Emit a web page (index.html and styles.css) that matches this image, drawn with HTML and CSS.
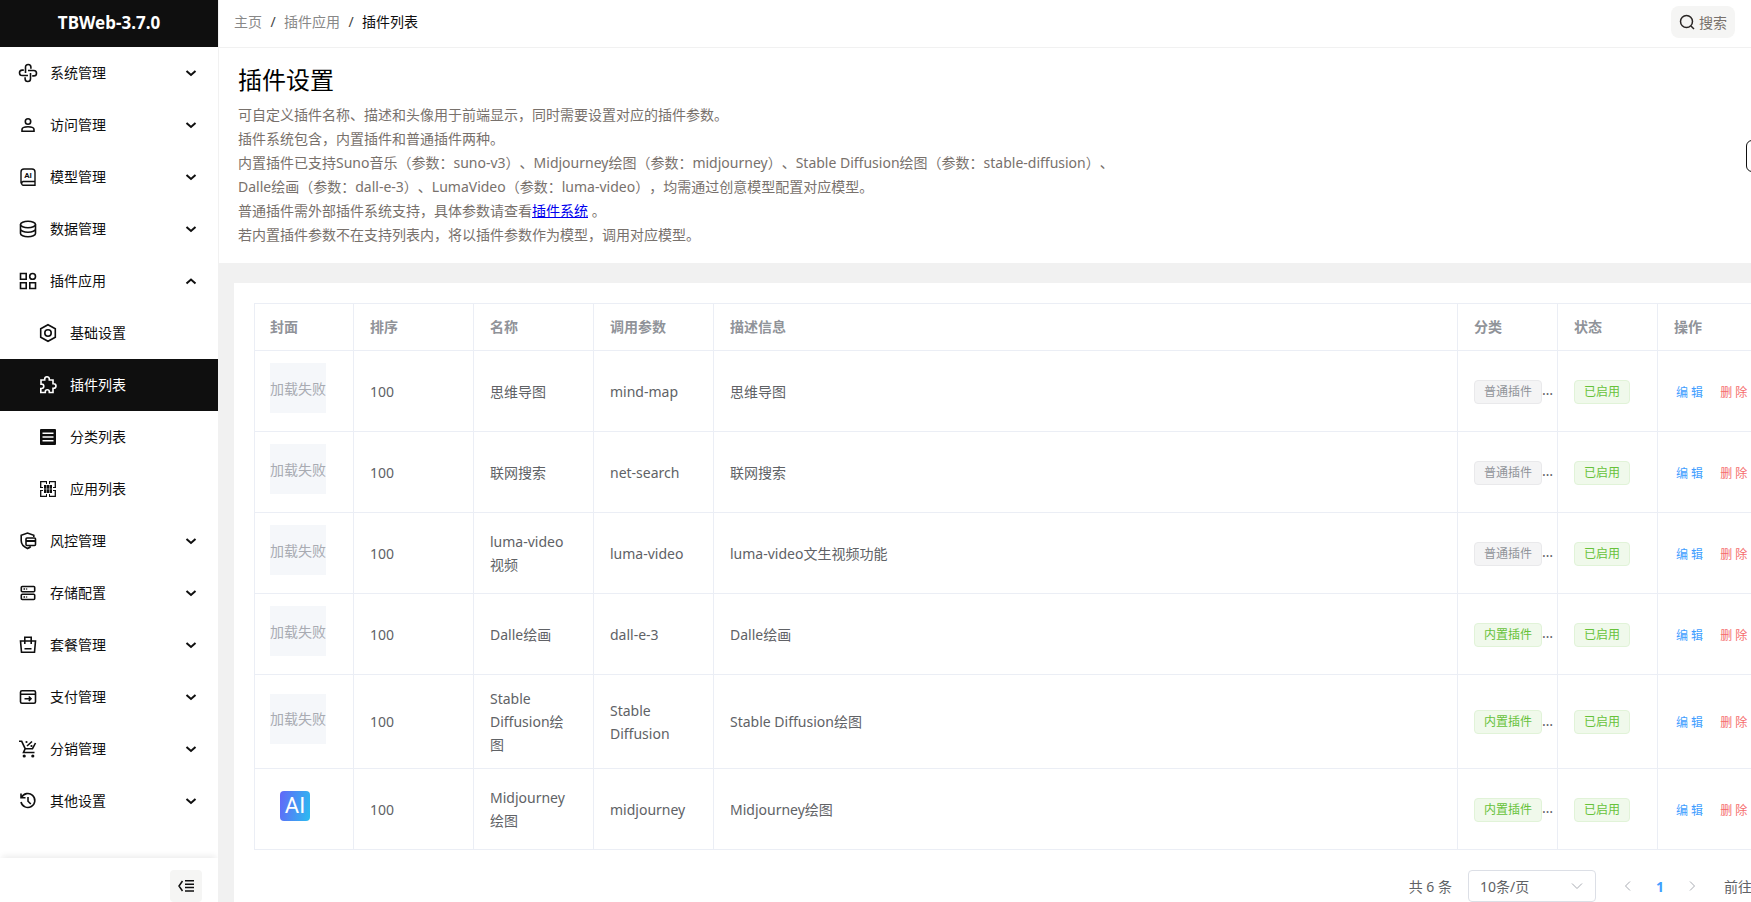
FILE: index.html
```html
<!DOCTYPE html>
<html lang="zh-CN">
<head>
    <meta charset="UTF-8">
    <meta name="viewport" content="width=device-width, initial-scale=1.0">
    <title>插件列表 - TBWeb</title>
    <link rel="stylesheet" href="styles.css">
</head>
<body>
    <!-- Shared icons -->
    <svg class="icon-defs" aria-hidden="true">
        <symbol id="i-down" viewBox="0 0 12 12"><path d="M1.5 4 6 8l4.5-4" fill="none" stroke="currentColor" stroke-width="2"/></symbol>
        <symbol id="i-up" viewBox="0 0 12 12"><path d="M1.5 8.5 6 4.5l4.5 4" fill="none" stroke="currentColor" stroke-width="2"/></symbol>
    </svg>

    <!-- Sidebar -->
    <aside class="sidebar">
        <div class="logo">TBWeb-3.7.0</div>
        <nav class="menu">
            <button type="button" class="menu-item">
                <svg class="menu-icon" viewBox="0 0 20 20"><path d="M7.500 10V4.200a2.700 2.700 0 0 1 5.400 0v1.600M10 7.500h5.800a2.700 2.700 0 0 1 0 5.400h-1.600M12.500 10v5.800a2.700 2.700 0 0 1-5.400 0v-1.600M10 12.500H4.200a2.700 2.700 0 0 1 0-5.400h1.600"/></svg>
                <span>系统管理</span><svg class="arrow"><use href="#i-down"/></svg>
            </button>
            <button type="button" class="menu-item">
                <svg class="menu-icon" viewBox="0 0 20 20"><circle cx="10" cy="6.5" r="2.7"/><path d="M4 16.200v-1.700c0-1.600 2.500-2.700 6-2.700s6 1.100 6 2.700v1.700z"/></svg>
                <span>访问管理</span><svg class="arrow"><use href="#i-down"/></svg>
            </button>
            <button type="button" class="menu-item">
                <svg class="menu-icon" viewBox="0 0 20 20"><path d="M17 14.500H5a2 2 0 0 0 0 3.800h12V5a3 3 0 0 0-3-3H6a3 3 0 0 0-3 3v11.500" stroke-width="1.4"/><text x="10" y="11" class="icon-text">AI</text></svg>
                <span>模型管理</span><svg class="arrow"><use href="#i-down"/></svg>
            </button>
            <button type="button" class="menu-item">
                <svg class="menu-icon" viewBox="0 0 20 20"><ellipse cx="10" cy="5.5" rx="7.5" ry="3.2"/><path d="M2.500 5.500v9c0 1.800 3.300 3.200 7.500 3.200s7.500-1.400 7.500-3.200v-9M2.500 10c0 1.800 3.300 3.200 7.500 3.200s7.500-1.400 7.500-3.200"/></svg>
                <span>数据管理</span><svg class="arrow"><use href="#i-down"/></svg>
            </button>
            <button type="button" class="menu-item">
                <svg class="menu-icon" viewBox="0 0 20 20"><path d="M2.500 2.500h5.700v5.700H2.500zM2.500 11.800h5.700v5.700H2.500zM11.800 11.800h5.700v5.700h-5.700z"/><circle cx="14.6" cy="5.4" r="2.9"/></svg>
                <span>插件应用</span><svg class="arrow"><use href="#i-up"/></svg>
            </button>
            <a href="#" class="menu-item sub">
                <svg class="menu-icon" viewBox="0 0 20 20"><path d="M10 1.700 17.300 5.800v8.400L10 18.300 2.700 14.200V5.800z"/><circle cx="10" cy="10" r="3.2"/></svg>
                <span>基础设置</span>
            </a>
            <a href="#" class="menu-item sub active">
                <svg class="menu-icon" viewBox="0 0 20 20"><path d="M3 5h3.700V4a2.300 2.300 0 0 1 4.600 0v1H15v3.700h.7a2.300 2.300 0 0 1 0 4.600H15v4.200h-3.700v-.8a2 2 0 0 0-4 0v.8H2.800v-4h.8a2.200 2.200 0 0 0 0-4.400H3z"/></svg>
                <span>插件列表</span>
            </a>
            <a href="#" class="menu-item sub">
                <svg class="menu-icon" viewBox="0 0 20 20"><rect x="2" y="2" width="16" height="16" rx="1" fill="currentColor" stroke="none"/><path d="M4.500 6.300h11M4.500 10h11M4.500 13.800h11" stroke="#fff"/></svg>
                <span>分类列表</span>
            </a>
            <a href="#" class="menu-item sub">
                <svg class="menu-icon" viewBox="0 0 20 20"><path d="M8.500 2.700H2.700v5.800M11.500 2.700h5.800v5.800M8.500 17.300H2.700v-5.800M11.500 17.300h5.800v-5.800" stroke-width="1.3"/><path d="M8.500 2v3M11.500 2v3M8.500 15v3M11.500 15v3M2 8.500h3M15 8.500h3M2 11.500h3M15 11.500h3" stroke-width="1"/><path d="M6 6h8v8H6z" fill="currentColor" stroke="none"/><path d="M8.500 6v8M11.500 6v8M6 10h8" stroke="#fff" stroke-width=".5"/></svg>
                <span>应用列表</span>
            </a>
            <button type="button" class="menu-item">
                <svg class="menu-icon" viewBox="0 0 20 20"><path d="M15.800 6V4.300L9.500 2 3.200 4.300v5.500c0 3.600 2.600 6 6.300 7.700 1.300-.6 2.400-1.300 3.300-2"/><rect x="8" y="7" width="9.500" height="7.500" rx="1"/><path d="M8 10h9.500" stroke-width="2"/></svg>
                <span>风控管理</span><svg class="arrow"><use href="#i-down"/></svg>
            </button>
            <button type="button" class="menu-item">
                <svg class="menu-icon" viewBox="0 0 20 20"><rect x="3.300" y="3.500" width="13.400" height="5.200" rx="1"/><rect x="3.300" y="11.300" width="13.400" height="5.200" rx="1"/><path d="M5.500 6h1.600M8.200 6h1M5.500 14h1.600M8.200 14h1"/></svg>
                <span>存储配置</span><svg class="arrow"><use href="#i-down"/></svg>
            </button>
            <button type="button" class="menu-item">
                <svg class="menu-icon" viewBox="0 0 20 20"><path d="M2.500 6h15l-1 11.300h-13zM6.800 6V2.300h6.400V6M6.800 6v3M13.200 6v3M6.500 13.800h7"/></svg>
                <span>套餐管理</span><svg class="arrow"><use href="#i-down"/></svg>
            </button>
            <button type="button" class="menu-item">
                <svg class="menu-icon" viewBox="0 0 20 20"><rect x="2.500" y="3.800" width="15" height="12.400" rx="1.500"/><path d="M2.500 7.300h15M6.500 11.700h6M10.800 9.500l2.200 2.200-2.200 2.200"/></svg>
                <span>支付管理</span><svg class="arrow"><use href="#i-down"/></svg>
            </button>
            <button type="button" class="menu-item">
                <svg class="menu-icon" viewBox="0 0 20 20"><path d="M1 2.300h2.700l3.500 7.400h7.300L17.500 4M7.200 9.700 5.500 13.500h11M9 7l5-4.500"/><g fill="currentColor" stroke="none"><circle cx="8.500" cy="3" r="1.100"/><circle cx="13.500" cy="7" r="1.100"/><circle cx="6.200" cy="17" r="1.600"/><circle cx="14.800" cy="17" r="1.600"/></g></svg>
                <span>分销管理</span><svg class="arrow"><use href="#i-down"/></svg>
            </button>
            <button type="button" class="menu-item">
                <svg class="menu-icon" viewBox="0 0 20 20"><path d="M3.500 6.500a7 7 0 1 1-.5 4.500M3 2.500v4.300h4.500M10 6v4.200l2.800 2.800"/></svg>
                <span>其他设置</span><svg class="arrow"><use href="#i-down"/></svg>
            </button>
        </nav>
        <div class="sidebar-footer">
            <button type="button" class="collapse-btn" aria-label="收起菜单">
                <svg viewBox="0 0 18 18"><path d="M5.500 4 2 9l3.500 5M8 3.800h9M8 7.200h9M8 10.600h9M8 14h9"/></svg>
            </button>
        </div>
    </aside>

    <!-- Main area -->
    <div class="main">
        <header class="topbar">
            <nav class="breadcrumb">
                <a href="#">主页</a><span class="sep">/</span><a href="#">插件应用</a><span class="sep">/</span><span class="current">插件列表</span>
            </nav>
            <button type="button" class="search-btn">
                <svg viewBox="0 0 16 16"><circle cx="7.500" cy="7.500" r="6"/><path d="m12 12 3 3"/></svg>
                <span>搜索</span>
            </button>
        </header>

        <div class="content">
            <section class="page-header">
                <div>
                    <h1>插件设置</h1>
                    <div class="page-desc">
                        <p>可自定义插件名称、描述和头像用于前端显示，同时需要设置对应的插件参数。</p>
                        <p>插件系统包含，内置插件和普通插件两种。</p>
                        <p>内置插件已支持Suno音乐（参数：suno-v3）、Midjourney绘图（参数：midjourney）、Stable Diffusion绘图（参数：stable-diffusion）、</p>
                        <p>Dalle绘画（参数：dall-e-3）、LumaVideo（参数：luma-video），均需通过创意模型配置对应模型。</p>
                        <p>普通插件需外部插件系统支持，具体参数请查看<a href="#">插件系统</a> 。</p>
                        <p>若内置插件参数不在支持列表内，将以插件参数作为模型，调用对应模型。</p>
                    </div>
                </div>
                <button type="button" class="add-btn" aria-label="添加插件"></button>
            </section>

            <section class="card">
                <table class="plugin-table">
                    <colgroup>
                        <col class="w-100"><col class="w-120"><col class="w-120"><col class="w-120"><col><col class="w-100"><col class="w-100"><col class="w-180">
                    </colgroup>
                    <thead>
                        <tr><th>封面</th><th>排序</th><th>名称</th><th>调用参数</th><th>描述信息</th><th>分类</th><th>状态</th><th>操作</th></tr>
                    </thead>
                    <tbody>
                        <tr>
                            <td><div class="cover">加载失败</div></td><td>100</td><td>思维导图</td><td>mind-map</td><td>思维导图</td>
                            <td class="nowrap"><span class="tag info">普通插件</span>…</td><td><span class="tag success">已启用</span></td>
                            <td><div class="actions"><button type="button" class="link-btn">编 辑</button><button type="button" class="link-btn danger">删 除</button></div></td>
                        </tr>
                        <tr>
                            <td><div class="cover">加载失败</div></td><td>100</td><td>联网搜索</td><td>net-search</td><td>联网搜索</td>
                            <td class="nowrap"><span class="tag info">普通插件</span>…</td><td><span class="tag success">已启用</span></td>
                            <td><div class="actions"><button type="button" class="link-btn">编 辑</button><button type="button" class="link-btn danger">删 除</button></div></td>
                        </tr>
                        <tr>
                            <td><div class="cover">加载失败</div></td><td>100</td><td>luma-video视频</td><td>luma-video</td><td>luma-video文生视频功能</td>
                            <td class="nowrap"><span class="tag info">普通插件</span>…</td><td><span class="tag success">已启用</span></td>
                            <td><div class="actions"><button type="button" class="link-btn">编 辑</button><button type="button" class="link-btn danger">删 除</button></div></td>
                        </tr>
                        <tr>
                            <td><div class="cover">加载失败</div></td><td>100</td><td>Dalle绘画</td><td>dall-e-3</td><td>Dalle绘画</td>
                            <td class="nowrap"><span class="tag success">内置插件</span>…</td><td><span class="tag success">已启用</span></td>
                            <td><div class="actions"><button type="button" class="link-btn">编 辑</button><button type="button" class="link-btn danger">删 除</button></div></td>
                        </tr>
                        <tr>
                            <td><div class="cover">加载失败</div></td><td>100</td><td>Stable Diffusion绘图</td><td>Stable Diffusion</td><td>Stable Diffusion绘图</td>
                            <td class="nowrap"><span class="tag success">内置插件</span>…</td><td><span class="tag success">已启用</span></td>
                            <td><div class="actions"><button type="button" class="link-btn">编 辑</button><button type="button" class="link-btn danger">删 除</button></div></td>
                        </tr>
                        <tr>
                            <td><div class="cover image"><span class="ai-logo">AI</span></div></td><td>100</td><td>Midjourney绘图</td><td>midjourney</td><td>Midjourney绘图</td>
                            <td class="nowrap"><span class="tag success">内置插件</span>…</td><td><span class="tag success">已启用</span></td>
                            <td><div class="actions"><button type="button" class="link-btn">编 辑</button><button type="button" class="link-btn danger">删 除</button></div></td>
                        </tr>
                    </tbody>
                </table>

                <!-- Pagination -->
                <div class="pagination">
                    <span>共 6 条</span>
                    <div class="page-size">
                        <select aria-label="每页条数">
                            <option>10条/页</option>
                            <option>20条/页</option>
                            <option>50条/页</option>
                        </select>
                        <svg viewBox="0 0 14 14"><path d="m2 4.500 5 5 5-5"/></svg>
                    </div>
                    <div class="pager">
                        <button type="button" aria-label="上一页"><svg viewBox="0 0 14 14"><path d="M9 2.500 4.500 7 9 11.500"/></svg></button>
                        <button type="button" class="current">1</button>
                        <button type="button" aria-label="下一页"><svg viewBox="0 0 14 14"><path d="M5 2.500 9.500 7 5 11.500"/></svg></button>
                    </div>
                    <label class="jumper">前往<input type="text" value="1">页</label>
                </div>
            </section>
        </div>
    </div>
</body>
</html>
```

FILE: styles.css
```css
/* Global */
* {
    box-sizing: border-box;
}
body {
    margin: 0;
    height: 100vh;
    display: flex;
    overflow: hidden;
    background-color: #f1f1f1;
    color: #0f0f0f;
    font-family: "Noto Sans", "Noto Sans CJK SC", sans-serif;
    font-size: 14px;
    text-spacing-trim: space-all;
}
button, input, select {
    font: inherit;
    color: inherit;
}
button {
    border: none;
    background: none;
    padding: 0;
    cursor: pointer;
}
svg {
    fill: none;
    stroke: currentColor;
}
.icon-defs {
    display: none;
}

/* Sidebar */
.sidebar {
    width: 218px;
    flex-shrink: 0;
    display: flex;
    flex-direction: column;
    background-color: #fff;
    box-shadow: 1px 0 #f1f1f1;
    z-index: 1;
}
.logo {
    height: 47px;
    line-height: 46px;
    flex-shrink: 0;
    background-color: #0f0f0f;
    color: #fff;
    font-size: 17px;
    font-weight: bold;
    text-align: center;
}
.menu {
    flex: 1;
    min-height: 0;
    overflow: hidden;
}
.menu-item {
    width: 100%;
    height: 52px;
    padding: 0 21px 0 18px;
    display: flex;
    align-items: center;
    gap: 12px;
    color: #0f0f0f;
    text-decoration: none;
}
.menu-item span {
    padding-bottom: 2px;
}
.menu-item.sub {
    padding-left: 38px;
}
.menu-item.active {
    background-color: #0f0f0f;
    color: #fff;
}
.menu-icon {
    width: 20px;
    height: 20px;
    stroke-width: 1.6;
}
.icon-text {
    font-family: Roboto, sans-serif;
    font-size: 8px;
    font-weight: bold;
    text-anchor: middle;
    fill: currentColor;
    stroke: none;
}
.arrow {
    width: 12px;
    height: 12px;
    margin-left: auto;
}
.sidebar-footer {
    padding: 12px 16px 0;
    display: flex;
    justify-content: flex-end;
    box-shadow: 0 -4px 6px -2px rgba(0, 0, 0, 0.08);
    clip-path: inset(-10px 0 0);
}
.collapse-btn {
    width: 32px;
    height: 32px;
    display: flex;
    align-items: center;
    justify-content: center;
    border-radius: 4px;
    background-color: #f5f5f4;
}
.collapse-btn svg {
    width: 18px;
    height: 18px;
    stroke-width: 1.5;
}

/* Top bar */
.main {
    flex: 1;
    min-width: 0;
    overflow: hidden;
}
.topbar {
    height: 48px;
    padding: 0 16px;
    display: flex;
    align-items: center;
    justify-content: space-between;
    background-color: #fff;
    border-bottom: 1px solid #f1f1f1;
}
.breadcrumb {
    display: flex;
    line-height: 20px;
    padding-bottom: 4px;
}
.breadcrumb a {
    color: #888;
    text-decoration: none;
}
.breadcrumb .sep {
    width: 22px;
    text-align: center;
    color: #444;
}
.search-btn {
    height: 32px;
    margin-bottom: 4px;
    padding: 0 8px;
    display: flex;
    align-items: center;
    gap: 4px;
    border-radius: 8px;
    background-color: #f5f5f4;
    color: #78716c;
}
.search-btn svg {
    width: 16px;
    height: 16px;
    stroke: #292524;
    stroke-width: 1.5;
}

/* Page header */
.content {
    min-width: 1656px;
}
.page-header {
    padding: 16px 20px;
    display: flex;
    align-items: center;
    justify-content: space-between;
    background-color: #fff;
}
.page-header h1 {
    margin: 0 0 7px;
    font-size: 24px;
    font-weight: normal;
    line-height: 32px;
    color: #000;
}
.page-desc {
    color: #78716c;
    line-height: 24px;
}
.page-desc p {
    margin: 0;
}
.page-desc a {
    color: #0000ee;
}
.add-btn {
    width: 108px;
    height: 32px;
    border: 1px solid #0f0f0f;
    border-radius: 6px;
}

/* Table */
.card {
    margin: 20px 16px;
    padding: 20px;
    background-color: #fff;
}
.plugin-table {
    width: 100%;
    table-layout: fixed;
    border-spacing: 0;
    color: #606266;
    line-height: 23px;
}
.w-100 {
    width: 100px;
}
.w-120 {
    width: 120px;
}
.w-180 {
    width: 180px;
}
.plugin-table th,
.plugin-table td {
    padding: 12px 16px;
    border-right: 1px solid #ebeef5;
    border-bottom: 1px solid #ebeef5;
    text-align: left;
}
.plugin-table th {
    padding: 11px 16px 12px;
    border-top: 1px solid #ebeef5;
    color: #909399;
}
.plugin-table th:first-child,
.plugin-table td:first-child {
    padding-left: 15px;
    border-left: 1px solid #ebeef5;
}
.nowrap {
    white-space: nowrap;
}
.cover {
    width: 56px;
    height: 50px;
    margin-bottom: 6px;
    display: flex;
    align-items: center;
    justify-content: center;
    background-color: #f5f7fa;
    color: #a8abb2;
}
.cover.image {
    width: 50px;
    background: none;
}
.ai-logo {
    width: 30px;
    height: 30px;
    border-radius: 4px;
    background: linear-gradient(100deg, #6366f8, #2bbdf0);
    color: #fff;
    font-family: Roboto, sans-serif;
    font-size: 22px;
    line-height: 30px;
    text-align: center;
}
.tag {
    display: inline-block;
    height: 24px;
    padding: 0 9px;
    border: 1px solid;
    border-radius: 4px;
    font-size: 12px;
    line-height: 22px;
    vertical-align: middle;
}
.tag.info {
    background-color: #f4f4f5;
    border-color: #e9e9eb;
    color: #909399;
}
.tag.success {
    background-color: #f0f9eb;
    border-color: #e1f3d8;
    color: #67c23a;
}
.actions {
    display: flex;
    gap: 13px;
    padding-top: 2px;
}
.link-btn {
    padding: 0 2px;
    font-size: 12px;
    color: #409eff;
    white-space: nowrap;
}
.link-btn.danger {
    color: #f56c6c;
}

/* Pagination */
.pagination {
    margin-top: 20px;
    display: flex;
    align-items: center;
    justify-content: flex-end;
    gap: 16px;
    color: #606266;
}
.page-size {
    position: relative;
}
.page-size select {
    appearance: none;
    width: 128px;
    height: 32px;
    padding: 0 11px;
    border: 1px solid #dcdfe6;
    border-radius: 4px;
    background-color: #fff;
}
.page-size svg {
    position: absolute;
    top: 9px;
    right: 12px;
    width: 14px;
    height: 14px;
    color: #a8abb2;
    pointer-events: none;
}
.pager {
    display: flex;
}
.pager button {
    width: 32px;
    height: 32px;
    display: flex;
    align-items: center;
    justify-content: center;
    color: #a8abb2;
}
.pager .current {
    color: #409eff;
    font-weight: bold;
}
.pager svg {
    width: 14px;
    height: 14px;
}
.jumper {
    display: flex;
    align-items: center;
    gap: 8px;
}
.jumper input {
    width: 56px;
    height: 32px;
    border: 1px solid #dcdfe6;
    border-radius: 4px;
    text-align: center;
}
```
